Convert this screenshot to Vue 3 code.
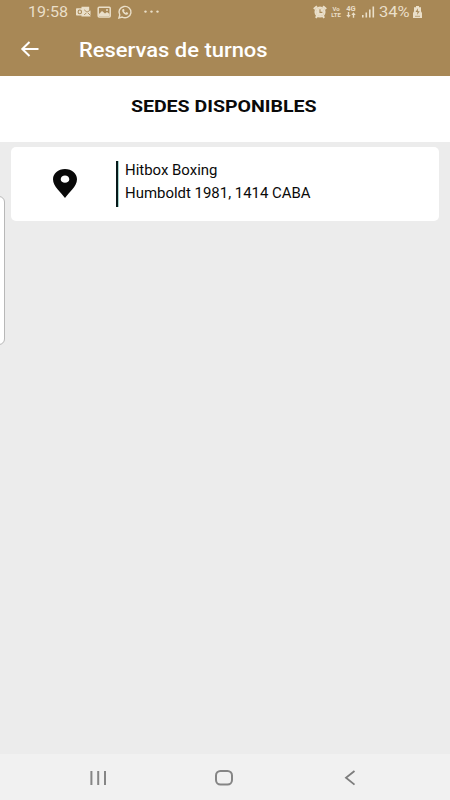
<script setup>
const venues = [{ name: 'Hitbox Boxing', address: 'Humboldt 1981, 1414 CABA' }]
</script>

<template>
  <div class="screen">
    <header class="top">
      <div class="status">
        <span class="time"><span class="wide">19:58</span></span>
        <svg class="left-icons" width="90" height="16" viewBox="0 0 90 16" fill="none">
          <path d="M5.5 2.8h7.7V6l1.3.6v5.9H5.5z" fill="#eadfc9" />
          <rect x="0" y="4.2" width="7.6" height="7.4" rx=".8" fill="#eadfc9" />
          <ellipse cx="3.8" cy="7.9" rx="1.7" ry="1.9" stroke="#a88856" stroke-width="1.1" />
          <path d="M8.2 5.8l2.8 2.4L14.5 6M8.2 11l2-2M12 9l2.5 2.5" stroke="#a88856" stroke-width=".9" />
          <rect x="22.2" y="3.2" width="12" height="9.8" rx="1" stroke="#eadfc9" stroke-width="1.5" />
          <path d="M23 11.5V10l3-3 3 2.5 2-1.5 2.5 2v2H23z" fill="#eadfc9" />
          <circle cx="31" cy="6" r="1" fill="#eadfc9" />
          <path d="M42.9 14l.9-3.1a6 5.7 0 1 1 2.4 2.2z" stroke="#eadfc9" stroke-width="1.4" />
          <path d="M46.5 5.2c-1.5 2.5 2.5 6.3 5.1 5.4l.7-1.5-1.8-1-.9.8-1.7-1.7.7-.9-.7-1.3z" fill="#eadfc9" />
          <g fill="#eadfc9"><circle cx="69.5" cy="7.6" r="1.2" /><circle cx="75.5" cy="7.6" r="1.2" /><circle cx="81.5" cy="7.6" r="1.2" /></g>
        </svg>
        <div class="status-right">
          <svg class="alarm" width="14" height="14" viewBox="0 0 14 14" fill="none" stroke="#eadfc9">
            <path d="M.8 4l3.2-2.8M13.2 4L10 1.2M2.8 12.8l1.5-2M11.2 12.8l-1.5-2" stroke-width="2" />
            <circle cx="7" cy="7" r="4.7" stroke-width="1.7" />
            <circle cx="7" cy="7" r="4" fill="#eadfc9" stroke="none" />
            <path d="M7 4.2v3.2h2.4" stroke="#a88856" stroke-width="1.1" />
          </svg>
          <span class="tiny volte"><span>Vo</span><span>LTE</span></span>
          <span class="tiny network"><span>4G</span>
            <svg width="10" height="6" viewBox="0 0 10 6" fill="#eadfc9"><path d="M1.8 0h1.4v3h1.5L2.5 5.8.3 3h1.5zM8.2 5.8V3h1.5L7.5.2 5.3 3h1.5v2.8z" /></svg>
          </span>
          <svg class="signal" width="13" height="12" viewBox="0 0 13 12" fill="#eadfc9"><path d="M0 9h1.6v2.5H0zM3.5 6.5h1.6v5H3.5zM7 3.5h1.6v8H7zM10.5.5h1.6v11h-1.6z" /></svg>
          <span class="percent"><span class="wide">34%</span></span>
          <svg class="battery" width="9" height="12" viewBox="0 0 9 12"><path d="M3 0h3v1.3h2v4L9 7v5H0V7l1-1.7v-4h2z" fill="#eadfc9" /><path d="M5 2.2L2.5 6h2L4 9l2.7-3.8H4.8z" fill="#a88856" /><path d="M2 10.3h5" stroke="#a88856" stroke-width=".7" /></svg>
        </div>
      </div>
      <div class="bar">
        <svg width="20" height="16" viewBox="0 0 20 16" fill="none" stroke="#fff" stroke-width="2"><path d="M9.5 1L2.3 8l7.2 7M2.3 8h16.2" /></svg>
        <h1><span class="wide">Reservas de turnos</span></h1>
      </div>
    </header>
    <section class="heading"><h2><span class="wide">SEDES DISPONIBLES</span></h2></section>
    <main>
      <article v-for="venue in venues" :key="venue.name" class="card">
        <div class="pin">
          <svg width="24" height="29" viewBox="0 0 24 29"><path fill="#090909" fill-rule="evenodd" d="M12 0C5.2 0 0 4.4 0 10.2 0 17.4 8.2 23.4 12 29c3.8-5.6 12-11.6 12-18.8C24 4.4 18.8 0 12 0zm0 6.6c2.4 0 4.3 1.6 4.3 3.6s-1.9 3.6-4.3 3.6-4.3-1.6-4.3-3.6 1.9-3.6 4.3-3.6z" /></svg>
        </div>
        <div class="details">
          <p><span class="wide">{{ venue.name }}</span></p>
          <p><span class="wide">{{ venue.address }}</span></p>
        </div>
      </article>
    </main>
    <div class="edge"></div>
    <nav>
      <svg width="18" height="16" viewBox="0 0 18 16" stroke="#858585" stroke-width="2"><path d="M2.4 1v14M9.2 1v14M16 1v14" /></svg>
      <svg width="20" height="16" viewBox="0 0 20 16" fill="none" stroke="#858585" stroke-width="2"><rect x="2" y="1" width="16" height="13.6" rx="4.5" /></svg>
      <svg width="12" height="16" viewBox="0 0 12 16" fill="none" stroke="#7d7d7d" stroke-width="1.8"><path d="M10.5 1L2 7.8l8.5 6.8" /></svg>
    </nav>
  </div>
</template>

<style scoped>
.screen { position: relative; display: flex; flex-direction: column; width: 450px; height: 800px; overflow: hidden; background: #ececec; font-family: Roboto, sans-serif; color: #0a0a0a; }
h1, h2, p { margin: 0; white-space: nowrap; }
.wide { display: inline-block; transform: scaleX(1.15); transform-origin: left center; }
.top { height: 76px; box-sizing: border-box; background: #a88856; color: #fff; }
.status { display: flex; align-items: center; height: 24px; padding-left: 28px; color: #eadfc9; font-size: 14px; }
.time { width: 48px; }
.left-icons { margin-top: -1px; }
.status-right { display: flex; align-items: center; margin-left: 147px; }
.tiny { display: flex; flex-direction: column; align-items: center; font-size: 6px; line-height: 6px; font-weight: 700; }
.volte { width: 12px; margin-left: 3px; }
.network { width: 12px; margin-left: 3px; font-size: 7.5px; }
.signal { margin-left: 5px; }
.percent { width: 34px; margin-left: 4px; }
.percent .wide { transform: scaleX(1.18); }
.battery { flex: none; }
.bar { display: flex; align-items: center; height: 50px; padding-left: 20px; }
h1 { margin-left: 39px; padding-top: 4px; font-size: 19.5px; font-weight: 500; line-height: 48px; }
h1 .wide { transform: scaleX(1.125); }
.heading { height: 66px; background: #fff; text-align: center; }
h2 { padding-right: 2px; font-size: 17px; font-weight: 700; line-height: 61px; }
h2 .wide { transform-origin: center; }
main { flex: 1; padding: 5px 11px; }
.card { display: flex; align-items: center; height: 74px; border-radius: 5px; background: #fff; }
.pin { width: 105px; padding-left: 42.4px; padding-bottom: 2px; box-sizing: border-box; }
.pin svg { display: block; }
.details { box-sizing: border-box; height: 46px; margin-bottom: 1px; padding-left: 7px; border-left: 2px solid #07191a; box-shadow: inset 0.5px 0 0 #4fa89a; font-size: 14px; line-height: 23px; }
.details p { position: relative; top: -2px; }
.details .wide { transform: scaleX(1.067); }
.edge { position: absolute; left: -10px; top: 196px; width: 13px; height: 147px; border: 1px solid #b8b8b8; border-radius: 6px; background: #fff; box-sizing: content-box; }
nav { display: flex; align-items: center; justify-content: space-between; height: 46px; padding: 2px 94px 0 89px; box-sizing: border-box; background: #f1f1f1; }
nav svg:nth-child(2) { margin-right: 4px; }
</style>
